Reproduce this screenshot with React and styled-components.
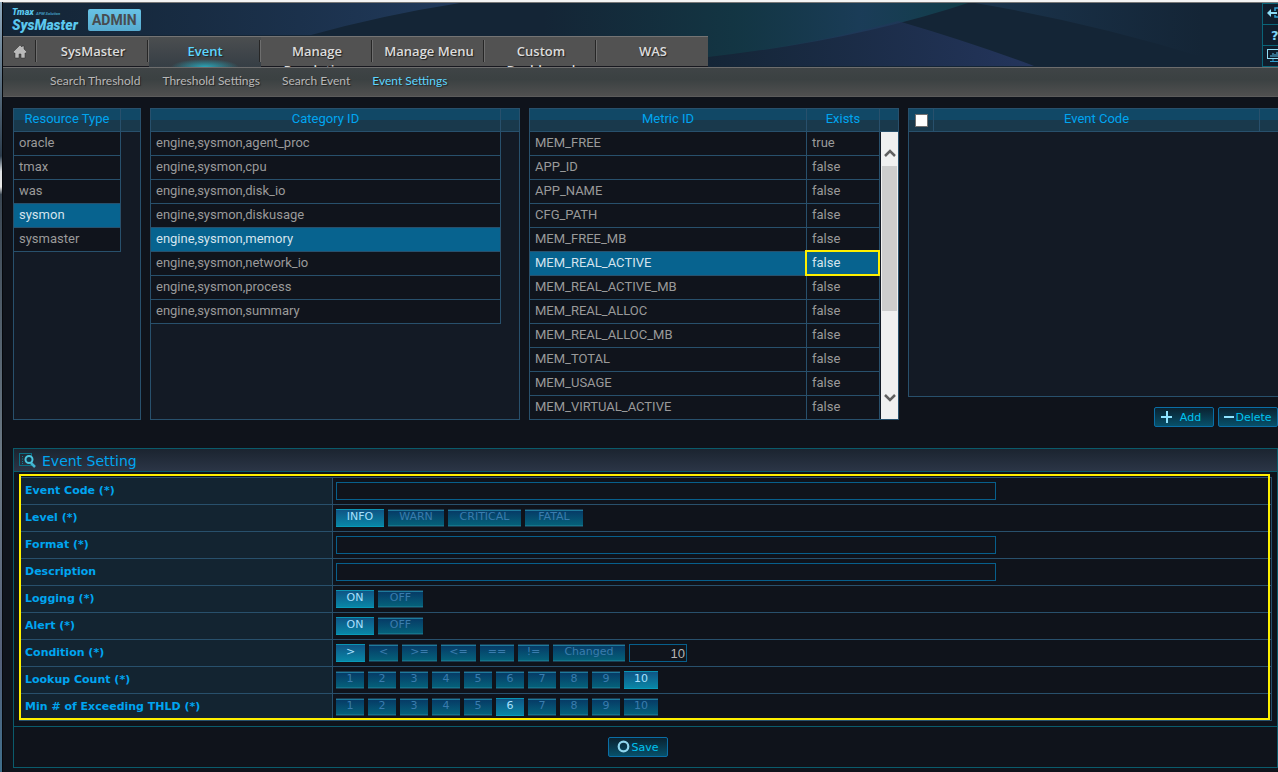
import React, { useState } from 'react';
import styled, { createGlobalStyle, css } from 'styled-components';

const resourceTypes = ['oracle', 'tmax', 'was', 'sysmon', 'sysmaster'];

const categories = [
    'engine,sysmon,agent_proc',
    'engine,sysmon,cpu',
    'engine,sysmon,disk_io',
    'engine,sysmon,diskusage',
    'engine,sysmon,memory',
    'engine,sysmon,network_io',
    'engine,sysmon,process',
    'engine,sysmon,summary',
];

const metrics = [
    { id: 'MEM_FREE', exists: 'true' },
    { id: 'APP_ID', exists: 'false' },
    { id: 'APP_NAME', exists: 'false' },
    { id: 'CFG_PATH', exists: 'false' },
    { id: 'MEM_FREE_MB', exists: 'false' },
    { id: 'MEM_REAL_ACTIVE', exists: 'false' },
    { id: 'MEM_REAL_ACTIVE_MB', exists: 'false' },
    { id: 'MEM_REAL_ALLOC', exists: 'false' },
    { id: 'MEM_REAL_ALLOC_MB', exists: 'false' },
    { id: 'MEM_TOTAL', exists: 'false' },
    { id: 'MEM_USAGE', exists: 'false' },
    { id: 'MEM_VIRTUAL_ACTIVE', exists: 'false' },
];

const tabs = ['SysMaster', 'Event', 'Manage Resolution', 'Manage Menu', 'Custom Dashboard', 'WAS'];
const subTabs = ['Search Threshold', 'Threshold Settings', 'Search Event', 'Event Settings'];

const levels = [
    { label: 'INFO', width: 48 },
    { label: 'WARN', width: 56 },
    { label: 'CRITICAL', width: 73 },
    { label: 'FATAL', width: 58 },
];
const onOff = [
    { label: 'ON', width: 38 },
    { label: 'OFF', width: 45 },
];
const conditions = [
    { label: '>', width: 29 },
    { label: '<', width: 29 },
    { label: '>=', width: 35 },
    { label: '<=', width: 35 },
    { label: '==', width: 34 },
    { label: '!=', width: 31 },
    { label: 'Changed', width: 72 },
];
const counts = [1, 2, 3, 4, 5, 6, 7, 8, 9, 10].map((n) => ({ label: String(n), width: n === 10 ? 34 : 28 }));

const Options = ({ name, items, value, onChange, children }) => (
    <OptionRow role="group" aria-label={name}>
        {items.map((el) => (
            <Option
                key={el.label}
                type="button"
                $width={el.width}
                $active={el.label === value}
                aria-pressed={el.label === value}
                onClick={() => onChange(el.label)}
            >
                {el.label}
            </Option>
        ))}
        {children}
    </OptionRow>
);

const Backdrop = () => (
    <BackdropSvg viewBox="0 0 1275 64" preserveAspectRatio="none" aria-hidden="true">
        <defs>
            <linearGradient id="navy" x1="0" x2="1">
                <stop offset="0" stopColor="#1b3350" stopOpacity="0" />
                <stop offset="1" stopColor="#213a5c" />
            </linearGradient>
            <linearGradient id="teal" x1="0" x2="1">
                <stop offset="0" stopColor="#12404a" stopOpacity="0" />
                <stop offset="0.45" stopColor="#12404c" stopOpacity="0.6" />
                <stop offset="0.75" stopColor="#1c4260" stopOpacity="0.8" />
                <stop offset="1" stopColor="#10404a" stopOpacity="0.9" />
            </linearGradient>
            <linearGradient id="indigo" x1="0" x2="1">
                <stop offset="0" stopColor="#22345a" stopOpacity="0" />
                <stop offset="1" stopColor="#24355c" />
            </linearGradient>
            <linearGradient id="haze" x1="0" x2="1">
                <stop offset="0" stopColor="#1d3a56" stopOpacity="0.7" />
                <stop offset="1" stopColor="#1d3a56" stopOpacity="0" />
            </linearGradient>
        </defs>
        <path d="M0 0H457Q380 12 308 32H0Z" fill="url(#navy)" />
        <path d="M540 0H965Q850 38 705 54H540Z" fill="url(#teal)" />
        <path d="M895 18Q970 40 1031 63H700V55Q810 42 895 18Z" fill="url(#indigo)" />
        <path d="M972 0Q1090 20 1199 54V0Z" fill="url(#haze)" />
    </BackdropSvg>
);

const HomeIcon = () => (
    <svg width="16" height="16" viewBox="0 0 16 16" aria-hidden="true">
        <path d="M8 1L1 8l1 1h1v5h4v-4h2v4h4V9h1l1-1-3-3V2h-2v1z" fill="#b9b9b9" stroke="#2b2b2b" strokeWidth="0.5" />
    </svg>
);

const SearchListIcon = () => (
    <svg width="18" height="17" viewBox="0 0 18 17" aria-hidden="true">
        <rect x="0.5" y="1.5" width="12" height="12" fill="none" stroke="#0b6f85" />
        <path d="M3 4.500h2M3 7h2M3 9.500h2M3 11.500h2" stroke="#0b8296" strokeDasharray="1 1" />
        <path d="M12 11l4 4" stroke="#41b6d2" strokeWidth="2.500" />
        <circle cx="10" cy="7.500" r="3.500" fill="#123448" stroke="#4cc4dd" strokeWidth="2" />
    </svg>
);

const LogoutIcon = () => (
    <svg width="18" height="14" viewBox="0 0 18 14" aria-hidden="true">
        <path d="M0 6l4-4v3h6v2H4v3z" fill="#8fdcf5" />
        <path d="M8 4V1h10M8 8v2h10M12 10v2" fill="none" stroke="#2f9fd0" strokeWidth="1.500" />
    </svg>
);

const MonitorIcon = () => (
    <svg width="16" height="14" viewBox="0 0 16 14" aria-hidden="true">
        <rect x="0.500" y="0.500" width="15" height="9" fill="none" stroke="#8fdcf5" />
        <path d="M4 8V6M6 8V4M8 8V5M10 8V3" stroke="#5cc0ea" />
        <path d="M6 10v2M3 12.500h12" stroke="#2f9fd0" />
    </svg>
);

const App = () => {
    const [resource, setResource] = useState('sysmon');
    const [category, setCategory] = useState('engine,sysmon,memory');
    const [metric, setMetric] = useState('MEM_REAL_ACTIVE');
    const [level, setLevel] = useState('INFO');
    const [logging, setLogging] = useState('ON');
    const [alert, setAlert] = useState('ON');
    const [condition, setCondition] = useState('>');
    const [lookup, setLookup] = useState('10');
    const [minCount, setMinCount] = useState('6');

    return (
        <>
            <GlobalStyle />
            <Page>
                <WindowEdge />
                <Main>
                    <Header>
                        <Backdrop />
                        <HeaderLeft>
                            <Brand>
                                <Logo>
                                    <LogoTop>Tmax <small>APM Solution</small></LogoTop>
                                    <LogoName>SysMaster</LogoName>
                                </Logo>
                                <AdminBadge>ADMIN</AdminBadge>
                            </Brand>
                            <Nav>
                                <HomeLink href="#home" aria-label="Home"><HomeIcon /></HomeLink>
                                {tabs.map((el) => (
                                    <Tab key={el} href={`#${el}`} $active={el === 'Event'}>{el}</Tab>
                                ))}
                            </Nav>
                        </HeaderLeft>
                        <Tools>
                            <Tool type="button" aria-label="Log out"><LogoutIcon /></Tool>
                            <Tool type="button" $indent={8}>?</Tool>
                            <Tool type="button" aria-label="Monitor"><MonitorIcon /></Tool>
                        </Tools>
                    </Header>
                    <SubNav>
                        {subTabs.map((el) => (
                            <SubLink key={el} href={`#${el}`} $active={el === 'Event Settings'}>{el}</SubLink>
                        ))}
                    </SubNav>

                    <Content>
                        <Grids>
                            <GridPanel $fixed>
                                <Grid>
                                    <colgroup><col width="107" /><col /></colgroup>
                                    <thead>
                                        <tr><th>Resource Type</th><th aria-hidden="true" /></tr>
                                    </thead>
                                    <tbody>
                                        {resourceTypes.map((el) => (
                                            <Row key={el} $selected={el === resource} onClick={() => setResource(el)}>
                                                <td>{el}</td>
                                            </Row>
                                        ))}
                                    </tbody>
                                </Grid>
                            </GridPanel>

                            <GridPanel>
                                <Grid>
                                    <colgroup><col /><col width="18" /></colgroup>
                                    <thead>
                                        <tr><th>Category ID</th><th aria-hidden="true" /></tr>
                                    </thead>
                                    <tbody>
                                        {categories.map((el) => (
                                            <Row key={el} $selected={el === category} onClick={() => setCategory(el)}>
                                                <td>{el}</td>
                                            </Row>
                                        ))}
                                    </tbody>
                                </Grid>
                            </GridPanel>

                            <GridPanel>
                                <Grid>
                                    <colgroup><col /><col width="73" /><col width="18" /></colgroup>
                                    <thead>
                                        <tr><th>Metric ID</th><th>Exists</th><th aria-hidden="true" /></tr>
                                    </thead>
                                    <tbody>
                                        {metrics.map((el) => (
                                            <Row key={el.id} $selected={el.id === metric} onClick={() => setMetric(el.id)}>
                                                <td>{el.id}</td>
                                                <ExistsCell $marked={el.id === metric}>{el.exists}</ExistsCell>
                                            </Row>
                                        ))}
                                    </tbody>
                                </Grid>
                                <ScrollTrack>
                                    <svg width="12" height="8" viewBox="0 0 12 8" aria-hidden="true">
                                        <path d="M1 7l5-5 5 5" fill="none" stroke="#606060" strokeWidth="2.500" />
                                    </svg>
                                    <ScrollThumb />
                                    <svg width="12" height="8" viewBox="0 0 12 8" aria-hidden="true">
                                        <path d="M1 1l5 5 5-5" fill="none" stroke="#606060" strokeWidth="2.500" />
                                    </svg>
                                </ScrollTrack>
                            </GridPanel>

                            <EventColumn>
                                <GridPanel $open>
                                    <Grid>
                                        <colgroup><col width="25" /><col /><col width="18" /></colgroup>
                                        <thead>
                                            <tr>
                                                <th><CheckAll type="checkbox" aria-label="Select all event codes" /></th>
                                                <th>Event Code</th>
                                                <th aria-hidden="true" />
                                            </tr>
                                        </thead>
                                    </Grid>
                                </GridPanel>
                                <Actions>
                                    <ActionButton type="button">
                                        <svg width="12" height="12" viewBox="0 0 12 12" aria-hidden="true">
                                            <path d="M6 0v12M0 6h11" stroke="#8fe3ff" strokeWidth="2" />
                                        </svg>
                                        <AddLabel>Add</AddLabel>
                                    </ActionButton>
                                    <ActionButton type="button">
                                        <svg width="10" height="12" viewBox="0 0 10 12" aria-hidden="true">
                                            <path d="M0 6h10" stroke="#8fe3ff" strokeWidth="2" />
                                        </svg>
                                        Delete
                                    </ActionButton>
                                </Actions>
                            </EventColumn>
                        </Grids>

                        <SettingPanel>
                            <SettingTitle><SearchListIcon />Event Setting</SettingTitle>
                            <FormArea>
                                <FormTable>
                                    <FormRow>
                                        <FormLabel as="label" htmlFor="code">Event Code (*)</FormLabel>
                                        <FormField><TextInput id="code" type="text" /></FormField>
                                    </FormRow>
                                    <FormRow>
                                        <FormLabel>Level (*)</FormLabel>
                                        <FormField><Options name="Level" items={levels} value={level} onChange={setLevel} /></FormField>
                                    </FormRow>
                                    <FormRow>
                                        <FormLabel as="label" htmlFor="format">Format (*)</FormLabel>
                                        <FormField><TextInput id="format" type="text" /></FormField>
                                    </FormRow>
                                    <FormRow>
                                        <FormLabel as="label" htmlFor="description">Description</FormLabel>
                                        <FormField><TextInput id="description" type="text" /></FormField>
                                    </FormRow>
                                    <FormRow>
                                        <FormLabel>Logging (*)</FormLabel>
                                        <FormField><Options name="Logging" items={onOff} value={logging} onChange={setLogging} /></FormField>
                                    </FormRow>
                                    <FormRow>
                                        <FormLabel>Alert (*)</FormLabel>
                                        <FormField><Options name="Alert" items={onOff} value={alert} onChange={setAlert} /></FormField>
                                    </FormRow>
                                    <FormRow>
                                        <FormLabel as="label" htmlFor="threshold">Condition (*)</FormLabel>
                                        <FormField>
                                            <Options name="Condition" items={conditions} value={condition} onChange={setCondition}>
                                                <NumberInput id="threshold" type="text" defaultValue="10" />
                                            </Options>
                                        </FormField>
                                    </FormRow>
                                    <FormRow>
                                        <FormLabel>Lookup Count (*)</FormLabel>
                                        <FormField><Options name="Lookup Count" items={counts} value={lookup} onChange={setLookup} /></FormField>
                                    </FormRow>
                                    <FormRow>
                                        <FormLabel>Min # of Exceeding THLD (*)</FormLabel>
                                        <FormField><Options name="Min # of Exceeding THLD" items={counts} value={minCount} onChange={setMinCount} /></FormField>
                                    </FormRow>
                                </FormTable>
                                <Highlight />
                            </FormArea>
                            <SettingFooter>
                                <ActionButton type="button">
                                    <svg width="13" height="13" viewBox="0 0 13 13" aria-hidden="true">
                                        <circle cx="6.500" cy="6.500" r="4.800" fill="none" stroke="#8fd6ee" strokeWidth="2.200" />
                                    </svg>
                                    <span>Save</span>
                                </ActionButton>
                            </SettingFooter>
                        </SettingPanel>
                    </Content>
                </Main>
            </Page>
        </>
    );
};

const line = '#28506c';

const GlobalStyle = createGlobalStyle`
    * {
        box-sizing: border-box;
    }

    body {
        margin: 0;
        background-color: #0f131b;
        font-family: Roboto, "Liberation Sans", sans-serif;
        font-size: 13px;
        color: #999;
    }

    a {
        text-decoration: none;
    }
`;

const Page = styled.div`
    display: flex;
    min-height: 100vh;
    border-top: 2px solid #f4f4f4;
    overflow: hidden;
`;

const WindowEdge = styled.div`
    flex: none;
    width: 3px;
    border-right: 1px solid #05070a;
    background: linear-gradient(#8fa9bd, #2c3c4c 20%, #dfe3e6 22%, #e8e8e8 24%, #3a4652 25%, #6c7a86 60%, #55607a 85%, #3f6f8c);
`;

const Main = styled.main`
    flex: 1;
    min-width: 0;
`;

const Header = styled.header`
    position: relative;
    display: flex;
    justify-content: space-between;
    border-top: 1px solid #777;
    background-color: #142536;
`;

const BackdropSvg = styled.svg`
    position: absolute;
    inset: 0;
    width: 100%;
    height: 100%;
`;

const HeaderLeft = styled.div`
    position: relative;
`;

const Brand = styled.div`
    display: flex;
    align-items: center;
    gap: 10px;
    height: 33px;
    padding-left: 9px;
`;

const Logo = styled.div`
    color: #5cc8ee;
    font-style: italic;
    font-weight: 900;
    white-space: nowrap;
`;

const LogoTop = styled.div`
    font-size: 9px;
    line-height: 8px;

    small {
        font-size: 4px;
        color: #3d8fb5;
    }
`;

const LogoName = styled.div`
    font-size: 14px;
    line-height: 14px;
`;

const AdminBadge = styled.span`
    width: 53px;
    height: 22px;
    border-radius: 2px;
    background: linear-gradient(#68c3e6, #57abd0);
    color: #484c50;
    font-size: 14px;
    font-weight: 700;
    line-height: 22px;
    text-align: center;
`;

const Nav = styled.nav`
    display: flex;
    width: 705px;
    height: 31px;
    border-top: 1px solid #747474;
    background: linear-gradient(#525252 29px, #17181f 29px);
    overflow: hidden;
`;

const separator = css`
    &::after {
        content: '';
        position: absolute;
        top: 3px;
        right: 0;
        width: 2px;
        height: 22px;
        background: linear-gradient(90deg, #262626 50%, #6e6e6e 50%);
    }
`;

const HomeLink = styled.a`
    position: relative;
    display: flex;
    flex: none;
    align-items: center;
    justify-content: center;
    width: 34px;
    ${separator}
`;

const Tab = styled.a`
    position: relative;
    flex: none;
    width: 112px;
    height: 30px;
    padding: 5px 10px 0;
    font-family: "Open Sans", sans-serif;
    font-size: 13px;
    font-weight: 600;
    line-height: 19px;
    text-align: center;
    color: ${({ $active }) => ($active ? '#5cd6ff' : '#dcdcdc')};
    text-shadow: 1px 1px 1px #222;

    ${({ $active }) => $active && css`
        background:
            radial-gradient(ellipse 34px 8px at 50% 100%, #2aa5b8, transparent),
            linear-gradient(#4b4e50, #363e45);
    `}

    &:not(:last-child) {
        ${separator}
    }
`;

const Tools = styled.div`
    position: relative;
    width: 16px;
    border-top: 1px solid #0a6478;
    border-left: 1px solid #0a6478;
    overflow: hidden;
`;

const Tool = styled.button`
    display: flex;
    align-items: center;
    width: 30px;
    height: 21px;
    padding: 0 0 0 ${({ $indent }) => $indent || 4}px;
    border: 0;
    border-bottom: 1px solid #0a6478;
    background-color: #0f1d2c;
    color: #7fd4f5;
    font-family: "DejaVu Sans", sans-serif;
    font-size: 13px;
    font-weight: 700;
`;

const SubNav = styled.nav`
    position: relative;
    display: flex;
    gap: 22px;
    height: 30px;
    padding-left: 47px;
    border-top: 1px solid #6d6d6d;
    border-bottom: 1px solid #5c5c5c;
    background: linear-gradient(#3f4446, #3b4142 40%, #505050);
`;

const SubLink = styled.a`
    font-family: Lato, "Open Sans", sans-serif;
    font-size: 12px;
    line-height: 26px;
    color: ${({ $active }) => ($active ? '#5cd6ff' : '#b8b8b8')};
    text-shadow: 1px 1px 1px #222;
    white-space: nowrap;
`;

const Content = styled.div`
    padding: 11px 0 4px 10px;
`;

const Grids = styled.div`
    display: flex;
    gap: 9px;
`;

const GridPanel = styled.section`
    position: relative;
    flex: ${({ $fixed }) => ($fixed ? '0 0 128px' : '1 1 2px')};
    min-width: 0;
    height: 312px;
    border: 1px solid ${line};
    background-color: #131a25;
    overflow: hidden;

    ${({ $open }) => $open && css`
        flex: none;
        height: 289px;
        border-right: 0;
    `}
`;

const Grid = styled.table`
    width: 100%;
    table-layout: fixed;
    border-collapse: separate;
    border-spacing: 0;

    th {
        height: 23px;
        padding: 0 0 2px;
        border-right: 1px solid ${line};
        border-bottom: 1px solid ${line};
        background: linear-gradient(#114866 50%, #19394c 50%);
        color: #00a5f0;
        font-weight: 400;
        line-height: 18px;
    }

    th:last-child {
        border-right: 0;
    }
`;

const Row = styled.tr`
    td {
        height: 24px;
        padding: 0 5px 2px;
        border-right: 1px solid ${line};
        border-bottom: 1px solid ${line};
        background-color: ${({ $selected }) => ($selected ? '#07638f' : '#10141c')};
        color: ${({ $selected }) => ($selected ? '#d5e4ee' : '#9a9a9a')};
        line-height: 20px;
        white-space: nowrap;
        cursor: pointer;
    }
`;

const ExistsCell = styled.td`
    position: relative;

    ${({ $marked }) => $marked && css`
        &::after {
            content: '';
            position: absolute;
            inset: -2px -1px -1px -2px;
            border: 2px solid #fff000;
        }
    `}
`;

const ScrollTrack = styled.div`
    position: absolute;
    top: 23px;
    right: 0;
    bottom: 0;
    display: flex;
    flex-direction: column;
    align-items: center;
    width: 17px;
    padding: 17px 0;
    background-color: #f0f0f0;
`;

const ScrollThumb = styled.div`
    width: 15px;
    height: 145px;
    margin: 9px 0 auto;
    background-color: #cdcdcd;
`;

const CheckAll = styled.input`
    appearance: none;
    display: block;
    width: 13px;
    height: 13px;
    margin: 2px auto 0;
    border: 1px solid #707070;
    background-color: #fff;
`;

const EventColumn = styled.div`
    flex: 1 1 2px;
    min-width: 0;
`;

const Actions = styled.div`
    display: flex;
    justify-content: flex-end;
    gap: 4px;
    padding-top: 10px;
`;

const ActionButton = styled.button`
    display: flex;
    align-items: center;
    justify-content: center;
    gap: 1px;
    width: 60px;
    height: 20px;
    padding: 1px 0 0;
    border: 1px solid #0a6ea6;
    border-radius: 2px;
    background: linear-gradient(#0a2230, #07506a);
    color: #00c4f0;
    font-family: "DejaVu Sans", sans-serif;
    font-size: 11px;
    line-height: 18px;

    svg {
        margin-bottom: 2px;
    }
`;

const AddLabel = styled.span`
    padding: 0 6px;
`;

const SettingPanel = styled.section`
    margin-top: 21px;
    border: 1px solid #0a5b6c;
`;

const SettingTitle = styled.h2`
    display: flex;
    align-items: center;
    gap: 5px;
    height: 23px;
    margin: 0;
    padding: 1px 5px 0;
    border-bottom: 1px solid #0a5b6c;
    background: linear-gradient(#1b2430, #2b3546);
    color: #00a5f0;
    font-family: "DejaVu Sans", sans-serif;
    font-size: 14px;
    font-weight: 400;
`;

const FormArea = styled.div`
    position: relative;
    padding: 5px;
`;

const FormTable = styled.div`
    border: 1px solid ${line};
`;

const FormRow = styled.div`
    display: flex;
    height: 27px;
    border-bottom: 1px solid ${line};

    &:last-child {
        height: 26px;
        border-bottom: 0;
    }
`;

const FormLabel = styled.div`
    flex: none;
    width: 313px;
    padding-left: 5px;
    border-right: 1px solid ${line};
    background-color: #132431;
    color: #00a5f0;
    font-family: "DejaVu Sans", sans-serif;
    font-size: 11px;
    font-weight: 700;
    line-height: 26px;
`;

const FormField = styled.div`
    display: flex;
    flex: 1;
    align-items: center;
    padding-left: 3px;
`;

const TextInput = styled.input`
    width: 660px;
    height: 18px;
    padding: 0 4px;
    border: 1px solid #075f8c;
    background-color: #10141c;
    color: #b5b5b5;
    font-size: 13px;
`;

const NumberInput = styled(TextInput)`
    width: 58px;
    padding: 0 1px;
    font-family: "Liberation Sans", sans-serif;
    text-align: right;
`;

const OptionRow = styled.div`
    display: flex;
    gap: 4px;
`;

const Option = styled.button`
    width: ${({ $width }) => $width}px;
    height: 18px;
    padding: 0 0 2px;
    border: 0;
    border-top: 1px solid ${({ $active }) => ($active ? '#0a93b2' : '#1b3d52')};
    border-bottom: 1px solid ${({ $active }) => ($active ? '#0a9ab8' : '#1b3d52')};
    background: ${({ $active }) => ($active
        ? 'linear-gradient(#0f5585, #0986a6)'
        : 'linear-gradient(#1e7a9c 1px, #063b66 1px, #05607a 15px, #14748a 15px)')};
    color: ${({ $active }) => ($active ? '#a8e0ff' : '#3a7cae')};
    font-family: "DejaVu Sans", sans-serif;
    font-size: 11px;
    line-height: 14px;
`;

const Highlight = styled.div`
    position: absolute;
    inset: 2px 7px 6px 5px;
    border: 2px solid #fff000;
    pointer-events: none;
`;

const SettingFooter = styled.div`
    display: flex;
    justify-content: center;
    padding: 10px 15px 10px 0;
    border-top: 1px solid #0a5b6c;
`;

export default App;
